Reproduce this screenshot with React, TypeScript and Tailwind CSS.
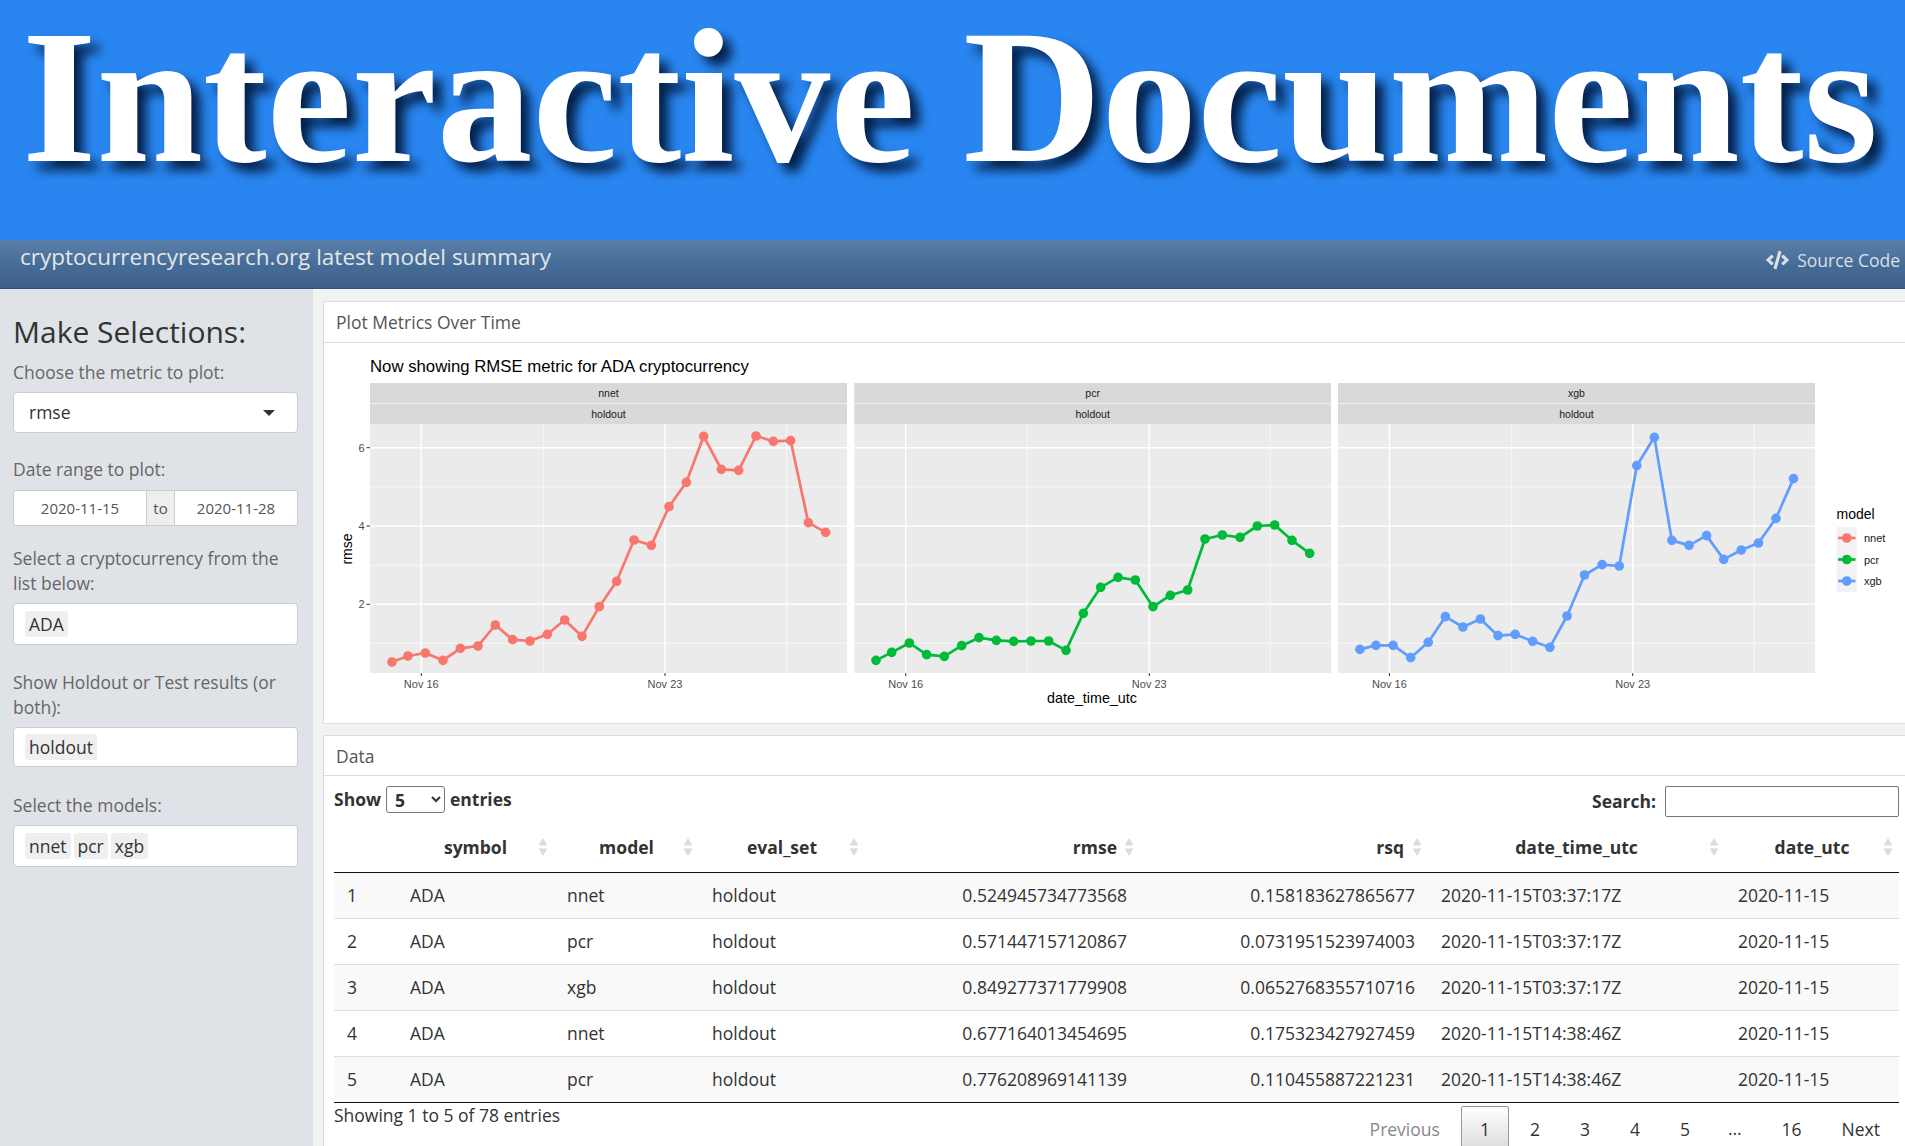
import { FaCode } from 'react-icons/fa';

const NNET = [[186,966],[234,948],[286,939],[339,961],[391,925],[444,918],[496,855],[548,899],[600,903],[652,883],[704,840],[756,889],[808,800],[860,724],[912,600],[964,616],[1017,500],[1069,427],[1121,289],[1174,388],[1226,391],[1278,288],[1330,304],[1382,302],[1435,548],[1487,577]];
const PCR = [[108,871],[155,847],[208,819],[260,854],[313,859],[365,827],[417,803],[469,811],[521,814],[573,813],[626,813],[678,841],[730,730],[782,652],[834,622],[886,630],[939,710],[991,676],[1043,660],[1095,507],[1147,495],[1200,502],[1252,468],[1304,465],[1356,511],[1409,550]];
const XGB = [[107,838],[150,826],[196,826],[243,863],[290,817],[336,740],[383,771],[430,747],[477,797],[523,793],[570,814],[616,832],[662,738],[709,615],[756,584],[802,588],[849,287],[896,202],[943,511],[989,526],[1036,497],[1082,568],[1129,540],[1175,519],[1222,445],[1269,326]];

const PANELS = [
  { name: 'nnet', x: 370, w: 477, color: '#f8766d', grid: [421.3, 543.3, 665, 786.7], pts: NNET.map(([a, b]) => [330 + a / 3, 340 + b / 3]) },
  { name: 'pcr', x: 854.3, w: 476.7, color: '#00ba38', grid: [905.7, 1027.3, 1149.3, 1270.3], pts: PCR.map(([a, b]) => [840 + a / 3, 370 + b / 3]) },
  { name: 'xgb', x: 1338, w: 477, color: '#619cff', grid: [1389.4, 1511.8, 1632.7, 1754.3], pts: XGB.map(([a, b]) => [1320 + a / 2.68, 370 + b / 3]) },
];

const ROWS = [
  ['1', 'ADA', 'nnet', 'holdout', '0.524945734773568', '0.158183627865677', '2020-11-15T03:37:17Z', '2020-11-15'],
  ['2', 'ADA', 'pcr', 'holdout', '0.571447157120867', '0.0731951523974003', '2020-11-15T03:37:17Z', '2020-11-15'],
  ['3', 'ADA', 'xgb', 'holdout', '0.849277371779908', '0.0652768355710716', '2020-11-15T03:37:17Z', '2020-11-15'],
  ['4', 'ADA', 'nnet', 'holdout', '0.677164013454695', '0.175323427927459', '2020-11-15T14:38:46Z', '2020-11-15'],
  ['5', 'ADA', 'pcr', 'holdout', '0.776208969141139', '0.110455887221231', '2020-11-15T14:38:46Z', '2020-11-15'],
];

function MetricsPlot() {
  const font = { fontFamily: 'Liberation Sans, Arial, sans-serif' };
  return (
    <svg viewBox="324 343 1581 380" className="block h-[380px] w-full" style={font}>
      <text x="370" y="371.5" fontSize="16.75" fill="#000">Now showing RMSE metric for ADA cryptocurrency</text>
      {PANELS.map((p) => (
        <g key={p.name}>
          <rect x={p.x} y="383" width={p.w} height="41" fill="#d9d9d9" />
          <line x1={p.x} x2={p.x + p.w} y1="403.5" y2="403.5" stroke="#f2f2f2" strokeWidth="1" />
          <text x={p.x + p.w / 2} y="397" fontSize="10.5" textAnchor="middle" fill="#1a1a1a">{p.name}</text>
          <text x={p.x + p.w / 2} y="418" fontSize="10.5" textAnchor="middle" fill="#1a1a1a">holdout</text>
          <rect x={p.x} y="424" width={p.w} height="249" fill="#ebebeb" />
          {[487, 565.3, 643.3].map((y) => (
            <line key={y} x1={p.x} x2={p.x + p.w} y1={y} y2={y} stroke="#fff" strokeWidth="0.7" />
          ))}
          {[447.7, 526, 604.3].map((y) => (
            <line key={y} x1={p.x} x2={p.x + p.w} y1={y} y2={y} stroke="#fff" strokeWidth="1.4" />
          ))}
          {p.grid.map((x, i) => (
            <line key={x} x1={x} x2={x} y1="424" y2="673" stroke="#fff" strokeWidth={i % 2 ? 0.7 : 1.4} />
          ))}
          <polyline points={p.pts.map((q) => q.join(',')).join(' ')} fill="none" stroke={p.color} strokeWidth="2.7" strokeLinejoin="round" />
          {p.pts.map((q) => (
            <circle key={q[0]} cx={q[0]} cy={q[1]} r="4.8" fill={p.color} />
          ))}
          {[p.grid[0], p.grid[2]].map((x, i) => (
            <g key={x}>
              <line x1={x} x2={x} y1="673" y2="676" stroke="#333" strokeWidth="1" />
              <text x={x} y="688" fontSize="11" textAnchor="middle" fill="#4d4d4d">{i ? 'Nov 23' : 'Nov 16'}</text>
            </g>
          ))}
        </g>
      ))}
      {[['6', 447.7], ['4', 526], ['2', 604.3]].map(([label, y]) => (
        <g key={label}>
          <line x1="366.5" x2="370" y1={y} y2={y} stroke="#333" strokeWidth="1" />
          <text x="364.5" y={Number(y) + 4} fontSize="11" textAnchor="end" fill="#4d4d4d">{label}</text>
        </g>
      ))}
      <text transform="translate(352 549) rotate(-90)" fontSize="14" textAnchor="middle" fill="#000">rmse</text>
      <text x="1092" y="703" fontSize="14.3" textAnchor="middle" fill="#000">date_time_utc</text>
      <text x="1836.5" y="519" fontSize="14" fill="#000">model</text>
      <rect x="1836.8" y="527" width="20" height="65" fill="#f2f2f2" />
      {PANELS.map((p, i) => {
        const y = [538, 559.5, 581][i];
        return (
          <g key={p.name}>
            <line x1="1838" x2="1855.5" y1={y} y2={y} stroke={p.color} strokeWidth="2.7" />
            <circle cx="1846.8" cy={y} r="4.8" fill={p.color} />
            <text x="1864" y={y + 4} fontSize="11" fill="#1a1a1a">{p.name}</text>
          </g>
        );
      })}
    </svg>
  );
}

function SortIcon() {
  return (
    <svg viewBox="0 0 10 18" className="absolute right-[6px] top-[14px] h-[18px] w-[10px]" fill="#dcdcdc">
      <path d="M5 0 L9.5 7.5 H0.5 Z" />
      <path d="M5 18 L0.5 10.5 H9.5 Z" />
    </svg>
  );
}

function Chips({ items, tight }: { items: string[]; tight?: boolean }) {
  return (
    <div className={`flex items-center gap-[3px] rounded-[4px] border border-[#cccccc] bg-white pl-[11px] ${tight ? 'h-[40px]' : 'h-[42px]'}`}>
      {items.map((item) => (
        <span key={item} className="rounded-[3px] bg-[#efefef] px-[4px] py-[2px] leading-[22px] text-[#333]">
          {item}
        </span>
      ))}
    </div>
  );
}

export default function App() {
  return (
    <div className="flex h-screen flex-col overflow-hidden bg-[#f2f2f2] font-['Open_Sans',sans-serif] text-[17.5px] text-[#333]">
      <div className="h-[240px] shrink-0 bg-[#2986f0] pl-[22px] font-['Liberation_Serif',serif] text-[191.5px] font-bold leading-[192px] whitespace-nowrap text-white [text-shadow:9px_9px_11px_#041f47]">
        Interactive Documents
      </div>

      <nav className="flex h-[49px] shrink-0 items-center justify-between border-b border-[#33527a] bg-gradient-to-b from-[#5b80aa] via-[#456d98] to-[#3e5f8a] pl-[20px] pr-[5px]">
        <span className="relative -top-[7px] text-[22.5px] text-[#e6e6e6]">cryptocurrencyresearch.org latest model summary</span>
        <a className="relative -top-[4px] flex items-center gap-[8px] text-[#dcdfe3]">
          <FaCode className="h-[22px] w-[23px]" />
          Source Code
        </a>
      </nav>

      <div className="flex min-h-0 flex-1">
        <aside className="w-[313px] shrink-0 bg-[#dfe3e8] pl-[13px] pr-[15px] pt-[22px] text-[#666]">
          <h2 className="text-[30px] leading-[42px] text-[#333]">Make Selections:</h2>
          <div className="mt-[7px] leading-[25px]">Choose the metric to plot:</div>
          <div className="mt-[7px] flex h-[41px] items-center justify-between rounded-[4px] border border-[#cccccc] bg-white pl-[15px] pr-[22px] text-[#333]">
            rmse
            <span className="h-0 w-0 border-x-[6px] border-t-[6px] border-x-transparent border-t-[#333]" />
          </div>
          <div className="mt-[24px] leading-[25px]">Date range to plot:</div>
          <div className="mt-[8px] flex h-[36px] items-stretch overflow-hidden rounded-[3px] border border-[#cccccc] bg-white text-[15px] leading-[34px] text-[#555]">
            <span className="w-[132px] text-center">2020-11-15</span>
            <span className="w-[29px] border-x border-[#cccccc] bg-[#eeeeee] text-center">to</span>
            <span className="flex-1 text-center">2020-11-28</span>
          </div>
          <div className="mt-[20px] leading-[25px]">Select a cryptocurrency from the list below:</div>
          <div className="mt-[7px]"><Chips items={['ADA']} /></div>
          <div className="mt-[25px] leading-[25px]">Show Holdout or Test results (or both):</div>
          <div className="mt-[7px]"><Chips items={['holdout']} tight /></div>
          <div className="mt-[26px] leading-[25px]">Select the models:</div>
          <div className="mt-[7px]"><Chips items={['nnet', 'pcr', 'xgb']} /></div>
        </aside>

        <main className="min-w-0 flex-1 pl-[10px] pt-[12px]">
          <section className="border-y border-l border-[#dddddd] bg-white">
            <h3 className="flex h-[41px] items-center border-b border-[#dddddd] pl-[12px] pt-[1px] text-[#555]">Plot Metrics Over Time</h3>
            <MetricsPlot />
          </section>

          <section className="mt-[11px] border-l border-t border-[#dddddd] bg-white">
            <h3 className="flex h-[40px] items-center border-b border-[#dddddd] pl-[12px] pt-[2px] text-[#555]">Data</h3>
            <div className="pl-[10px] pr-[6px] pt-[10px]">
              <div className="flex h-[31px] items-start justify-between font-bold">
                <label className="flex h-[27px] items-center">
                  Show
                  <select className="mx-[5px] h-[27px] w-[59px] rounded-[3px] border border-[#767676] bg-white pl-[4px] font-bold" defaultValue="5">
                    <option>5</option>
                  </select>
                  entries
                </label>
                <label className="flex items-center">
                  Search:
                  <input className="ml-[9px] h-[31px] w-[234px] rounded-[2px] border border-[#767676] bg-white" />
                </label>
              </div>
              <table className="mt-[7px] w-full table-fixed border-collapse">
                <colgroup>
                  <col className="w-[63px]" />
                  <col className="w-[157px]" />
                  <col className="w-[145px]" />
                  <col className="w-[166px]" />
                  <col className="w-[275px]" />
                  <col className="w-[288px]" />
                  <col className="w-[297px]" />
                  <col />
                </colgroup>
                <thead>
                  <tr className="h-[48px] border-b-[1.5px] border-[#111111] font-bold">
                    <th />
                    <th className="relative pb-[2px] text-center">symbol<SortIcon /></th>
                    <th className="relative pb-[2px] text-center">model<SortIcon /></th>
                    <th className="relative pb-[2px] text-center">eval_set<SortIcon /></th>
                    <th className="relative pb-[2px] pr-[23px] text-right">rmse<SortIcon /></th>
                    <th className="relative pb-[2px] pr-[24px] text-right">rsq<SortIcon /></th>
                    <th className="relative pb-[2px] text-center">date_time_utc<SortIcon /></th>
                    <th className="relative pb-[2px] text-center">date_utc<SortIcon /></th>
                  </tr>
                </thead>
                <tbody>
                  {ROWS.map((row, i) => (
                    <tr key={row[0]} className={`h-[46px] border-t border-[#dddddd] ${i % 2 === 0 ? 'bg-[#f9f9f9]' : 'bg-white'}`}>
                      {row.map((cell, j) => (
                        <td key={j} className={`px-[13px] ${j === 4 || j === 5 ? 'text-right' : ''}`}>{cell}</td>
                      ))}
                    </tr>
                  ))}
                </tbody>
              </table>
              <div className="flex items-start justify-between border-t-[1.5px] border-[#111111]">
                <div className="leading-[24px]">Showing 1 to 5 of 78 entries</div>
                <div className="mt-[3px] flex leading-[44px]">
                  <span className="border border-transparent px-[18px] text-[#888]">Previous</span>
                  <span className="ml-[2px] rounded-t-[2px] border border-[#979797] bg-gradient-to-b from-white to-[#dcdcdc] px-[18px]">1</span>
                  {['2', '3', '4', '5'].map((page) => (
                    <span key={page} className="ml-[2px] border border-transparent px-[18px]">{page}</span>
                  ))}
                  <span className="px-[19px]">…</span>
                  <span className="ml-[2px] border border-transparent px-[18px]">16</span>
                  <span className="ml-[2px] border border-transparent px-[18px]">Next</span>
                </div>
              </div>
            </div>
          </section>
        </main>
      </div>
    </div>
  );
}
